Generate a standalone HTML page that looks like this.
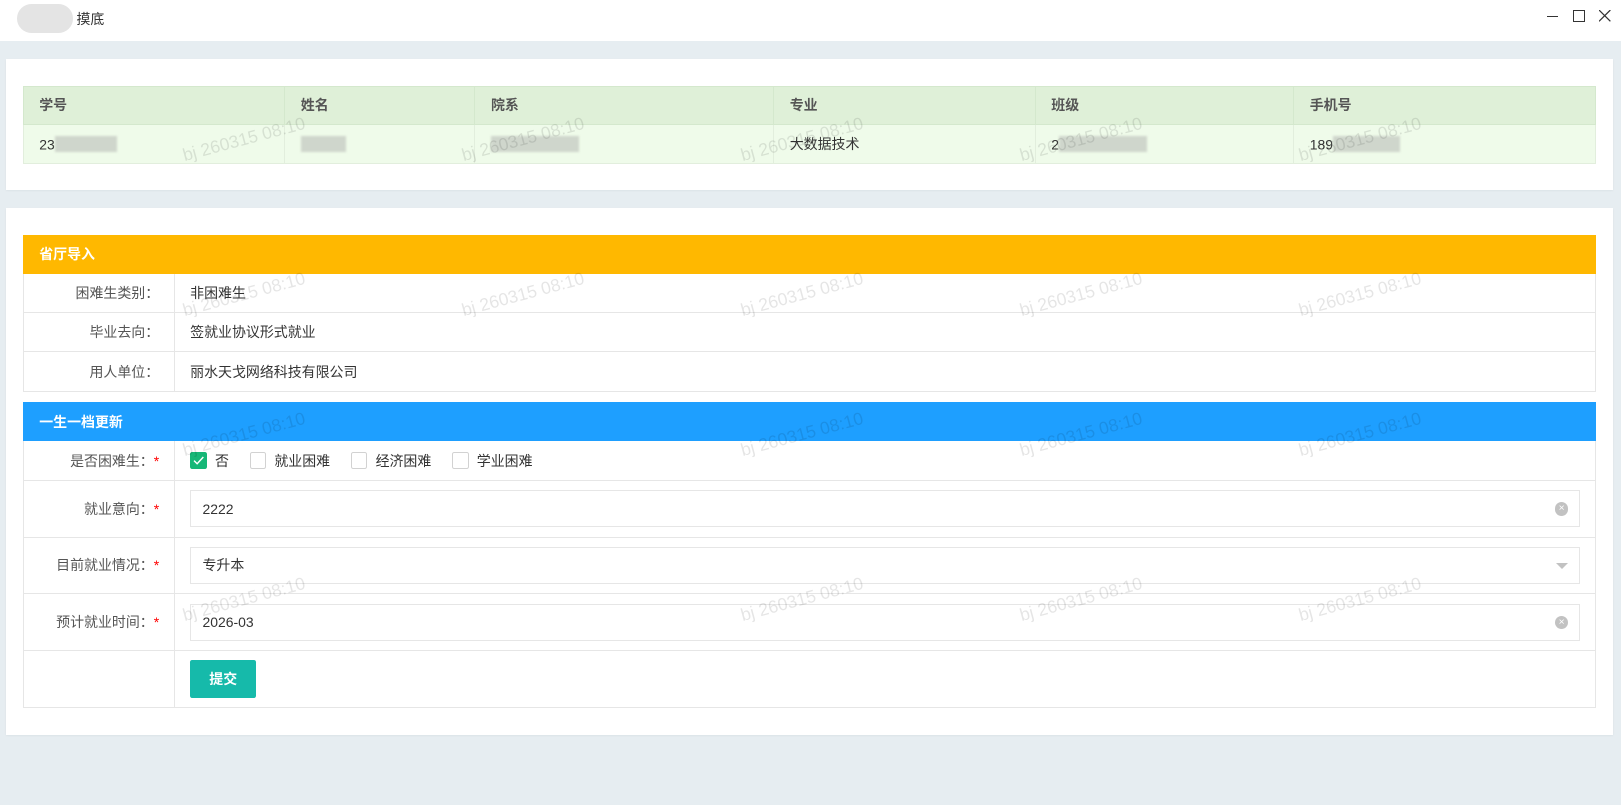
<!DOCTYPE html>
<html><head><meta charset="utf-8"><style>
*{box-sizing:border-box;margin:0;padding:0}
body{width:1621px;height:805px;background:#e6edf1;font-family:"Liberation Sans","Noto Sans CJK SC",sans-serif;color:#333;overflow:hidden}
#w{zoom:1.0338;position:relative;width:1568px;height:779px;font-size:13.5px}
.top{position:absolute;left:0;top:0;width:1568px;height:40px;background:#fff}
.card{position:absolute;left:6px;width:1554px;background:#fff;box-shadow:0 1px 2px rgba(0,0,0,.06)}
table{border-collapse:collapse;position:absolute;left:16px;width:1522px;table-layout:fixed}
td,th{border:1px solid #e6e6e6;text-align:left;font-weight:normal;padding:0 15px}
.t1 th{background:#dff0d8;height:37px;font-weight:bold;color:#555;border-color:#d4e8cd}
.t1 td{background:#effbea;height:38px;border-color:#e2eedd}
.lab{text-align:right;color:#555;padding-right:14px}
.hd{height:37px;color:#fff;font-weight:bold;padding-left:15px}
.r{height:38px}
.star{color:#f00}
.inp{height:36px;border:1px solid #e6e6e6;display:flex;align-items:center;padding-left:11px;position:relative;color:#333}
.clr{position:absolute;right:10px;top:11px;width:13px;height:13px;border-radius:50%;background:#c2c2c2;color:#fff;font-size:10px;line-height:13px;text-align:center}
.cb{display:inline-block;width:16px;height:16px;border:1px solid #d2d2d2;border-radius:2px;vertical-align:-3px;margin-right:8px;position:relative}
.blur{display:inline-block;height:16px;background:#cfd6cc;vertical-align:-3px;filter:blur(1px)}
.wm{position:absolute;color:rgba(0,0,0,.1);font-size:17px;transform:rotate(-15deg);white-space:nowrap;pointer-events:none}
</style></head><body><div id="w">
<div class="top">
<div style="position:absolute;left:16px;top:4px;width:55px;height:28px;border-radius:14px;background:#e4e4e4"></div>
<div style="position:absolute;left:74px;top:9px;color:#333">摸底</div>
<div style="position:absolute;left:1496px;top:15px;width:11px;height:1px;background:#333"></div>
<div style="position:absolute;left:1522px;top:10px;width:11px;height:11px;border:1px solid #333"></div>
<svg style="position:absolute;left:1547px;top:10px" width="11" height="11"><path d="M0 0L11 11M11 0L0 11" stroke="#333" stroke-width="1.2"/></svg>
</div>
<div class="card" style="top:57px;height:127px">
<table class="t1" style="top:26px">
<tr><th style="width:253px">学号</th><th style="width:184px">姓名</th><th style="width:289px">院系</th><th style="width:253px">专业</th><th style="width:250px">班级</th><th>手机号</th></tr>
<tr><td>23<span class="blur" style="width:60px"></span></td><td><span class="blur" style="width:44px"></span></td><td><span class="blur" style="width:85px"></span></td><td>大数据技术</td><td>2<span class="blur" style="width:85px"></span></td><td>189<span class="blur" style="width:65px"></span></td></tr>
</table>
</div>
<div class="card" style="top:201px;height:510px">
<table style="top:26px">
<colgroup><col style="width:146px"><col></colgroup>
<tr><td colspan="2" class="hd" style="background:#ffb800;border-color:#ffb800">省厅导入</td></tr>
<tr class="r"><td class="lab">困难生类别：</td><td>非困难生</td></tr>
<tr class="r"><td class="lab">毕业去向：</td><td>签就业协议形式就业</td></tr>
<tr class="r"><td class="lab">用人单位：</td><td>丽水天戈网络科技有限公司</td></tr>
</table>
<table style="top:188px">
<colgroup><col style="width:146px"><col></colgroup>
<tr><td colspan="2" class="hd" style="background:#1e9fff;border-color:#1e9fff">一生一档更新</td></tr>
<tr class="r"><td class="lab">是否困难生：<span class="star">*</span></td><td><span class="cb" style="background:#16b777;border-color:#16b777"><svg style="position:absolute;left:2px;top:3px" width="11" height="9"><path d="M1 4.5L4 7.5L10 1" stroke="#fff" stroke-width="1.4" fill="none"/></svg></span>否<span class="cb" style="margin-left:20px"></span>就业困难<span class="cb" style="margin-left:20px"></span>经济困难<span class="cb" style="margin-left:20px"></span>学业困难</td></tr>
<tr style="height:55px"><td class="lab">就业意向：<span class="star">*</span></td><td><div class="inp">2222<span class="clr">×</span></div></td></tr>
<tr style="height:55px"><td class="lab">目前就业情况：<span class="star">*</span></td><td><div class="inp">专升本<span style="position:absolute;right:10px;top:15px;border:6px solid transparent;border-top-color:#c2c2c2"></span></div></td></tr>
<tr style="height:55px"><td class="lab">预计就业时间：<span class="star">*</span></td><td><div class="inp">2026-03<span class="clr">×</span></div></td></tr>
<tr style="height:55px"><td class="lab"></td><td><div style="width:64px;height:37px;background:#16baaa;color:#fff;border-radius:2px;text-align:center;line-height:37px;font-weight:bold">提交</div></td></tr>
</table>
</div>
<div class="wm" style="left:175px;top:125px">bj 260315 08:10</div>
<div class="wm" style="left:445px;top:125px">bj 260315 08:10</div>
<div class="wm" style="left:715px;top:125px">bj 260315 08:10</div>
<div class="wm" style="left:985px;top:125px">bj 260315 08:10</div>
<div class="wm" style="left:1255px;top:125px">bj 260315 08:10</div>
<div class="wm" style="left:175px;top:275px">bj 260315 08:10</div>
<div class="wm" style="left:445px;top:275px">bj 260315 08:10</div>
<div class="wm" style="left:715px;top:275px">bj 260315 08:10</div>
<div class="wm" style="left:985px;top:275px">bj 260315 08:10</div>
<div class="wm" style="left:1255px;top:275px">bj 260315 08:10</div>
<div class="wm" style="left:175px;top:410px">bj 260315 08:10</div>
<div class="wm" style="left:715px;top:410px">bj 260315 08:10</div>
<div class="wm" style="left:985px;top:410px">bj 260315 08:10</div>
<div class="wm" style="left:1255px;top:410px">bj 260315 08:10</div>
<div class="wm" style="left:175px;top:570px">bj 260315 08:10</div>
<div class="wm" style="left:715px;top:570px">bj 260315 08:10</div>
<div class="wm" style="left:985px;top:570px">bj 260315 08:10</div>
<div class="wm" style="left:1255px;top:570px">bj 260315 08:10</div>
</div></body></html>
